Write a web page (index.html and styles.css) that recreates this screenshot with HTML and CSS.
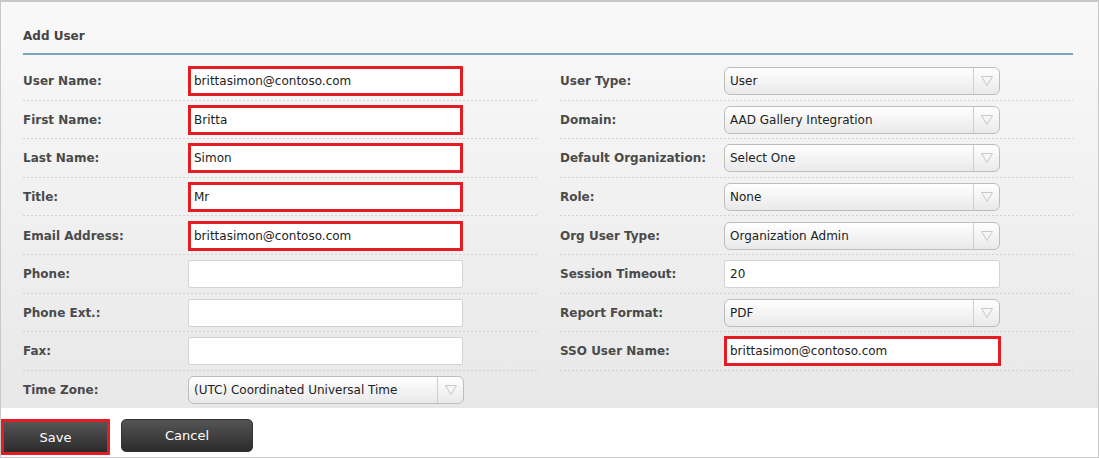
FILE: index.html
```html
<!DOCTYPE html>
<html>
<head>
<meta charset="utf-8">
<title>Add User</title>
<link rel="stylesheet" href="styles.css">
</head>
<body>
<div class="frame">
  <div class="panel">
    <h2 class="title">Add User</h2>
    <div class="rule"></div>
    <div class="grid">
      <div class="col">
        <div class="row"><span class="label">User Name:</span><div class="field hl">brittasimon@contoso.com</div></div>
        <div class="row"><span class="label">First Name:</span><div class="field hl">Britta</div></div>
        <div class="row"><span class="label">Last Name:</span><div class="field hl">Simon</div></div>
        <div class="row"><span class="label">Title:</span><div class="field hl">Mr</div></div>
        <div class="row"><span class="label">Email Address:</span><div class="field hl">brittasimon@contoso.com</div></div>
        <div class="row"><span class="label">Phone:</span><div class="field"></div></div>
        <div class="row"><span class="label">Phone Ext.:</span><div class="field"></div></div>
        <div class="row"><span class="label">Fax:</span><div class="field"></div></div>
        <div class="row last"><span class="label">Time Zone:</span><div class="select"><span class="sv">(UTC) Coordinated Universal Time</span><span class="arrow"><svg width="14" height="12" viewBox="0 0 14 12"><path d="M1.5 1.5 L12.5 1.5 L7 10.5 Z" fill="none" stroke="#c8c8c8" stroke-width="1"/></svg></span></div></div>
      </div>
      <div class="col">
        <div class="row"><span class="label">User Type:</span><div class="select"><span class="sv">User</span><span class="arrow"><svg width="14" height="12" viewBox="0 0 14 12"><path d="M1.5 1.5 L12.5 1.5 L7 10.5 Z" fill="none" stroke="#c8c8c8" stroke-width="1"/></svg></span></div></div>
        <div class="row"><span class="label">Domain:</span><div class="select"><span class="sv">AAD Gallery Integration</span><span class="arrow"><svg width="14" height="12" viewBox="0 0 14 12"><path d="M1.5 1.5 L12.5 1.5 L7 10.5 Z" fill="none" stroke="#c8c8c8" stroke-width="1"/></svg></span></div></div>
        <div class="row"><span class="label">Default Organization:</span><div class="select"><span class="sv">Select One</span><span class="arrow"><svg width="14" height="12" viewBox="0 0 14 12"><path d="M1.5 1.5 L12.5 1.5 L7 10.5 Z" fill="none" stroke="#c8c8c8" stroke-width="1"/></svg></span></div></div>
        <div class="row"><span class="label">Role:</span><div class="select"><span class="sv">None</span><span class="arrow"><svg width="14" height="12" viewBox="0 0 14 12"><path d="M1.5 1.5 L12.5 1.5 L7 10.5 Z" fill="none" stroke="#c8c8c8" stroke-width="1"/></svg></span></div></div>
        <div class="row"><span class="label">Org User Type:</span><div class="select"><span class="sv">Organization Admin</span><span class="arrow"><svg width="14" height="12" viewBox="0 0 14 12"><path d="M1.5 1.5 L12.5 1.5 L7 10.5 Z" fill="none" stroke="#c8c8c8" stroke-width="1"/></svg></span></div></div>
        <div class="row"><span class="label">Session Timeout:</span><div class="field">20</div></div>
        <div class="row"><span class="label">Report Format:</span><div class="select"><span class="sv">PDF</span><span class="arrow"><svg width="14" height="12" viewBox="0 0 14 12"><path d="M1.5 1.5 L12.5 1.5 L7 10.5 Z" fill="none" stroke="#c8c8c8" stroke-width="1"/></svg></span></div></div>
        <div class="row"><span class="label">SSO User Name:</span><div class="field hl">brittasimon@contoso.com</div></div>
      </div>
    </div>
  </div>
  <div class="footer">
    <button class="btn save">Save</button>
    <button class="btn cancel">Cancel</button>
  </div>
</div>
</body>
</html>
```
FILE: styles.css
```css
* { box-sizing: border-box; }
html, body { margin: 0; padding: 0; background: #fff; }
body {
  font-family: "DejaVu Sans", sans-serif;
  font-size: 12px;
  color: #222;
}
.frame {
  width: 1099px;
  height: 458px;
  border: 1px solid #c8c8c8;
  border-top-width: 2px;
  display: flex;
  flex-direction: column;
  background: #fff;
}
.panel {
  height: 406px;
  background: linear-gradient(#f9f9f9, #e8e8e8);
  padding: 0 25px 0 22px;
}
.title {
  margin: 0;
  padding-top: 27px;
  height: 51px;
  font-size: 12px;
  font-weight: bold;
  color: #444;
  line-height: 14px;
}
.rule {
  height: 2px;
  background: #7ca6bf;
  margin-bottom: 7px;
}
.grid {
  display: grid;
  grid-template-columns: 514px 513px;
  column-gap: 23px;
}
.row {
  height: 38.6px;
  display: flex;
  align-items: center;
  background: repeating-linear-gradient(90deg, #d2d2d2 0 2px, transparent 2px 4px) left bottom / 100% 1px no-repeat;
}
.row.last { background: none; }
.label {
  width: 165px;
  flex: none;
  font-weight: bold;
  color: #4a4a4a;
}
.col:last-child .label { width: 164px; }
.field {
  width: 275px;
  height: 28px;
  background: #fff;
  border: 1px solid #d3d3d3;
  border-radius: 2px;
  padding: 0 5px;
  line-height: 26px;
  color: #222;
}
.field.hl {
  border: 3px solid #e41c24;
  border-radius: 0;
  width: 275px;
  height: 30px;
  padding: 0 3px;
  line-height: 24px;
}
.col:last-child .field { width: 276px; }
.col:last-child .field.hl { width: 277px; }
.select {
  width: 276px;
  height: 28px;
  border: 1px solid #bdbdbd;
  border-radius: 6px;
  background: linear-gradient(#ffffff, #e9e9e9);
  display: flex;
  align-items: center;
}
.sv {
  flex: 1;
  padding-left: 5px;
  color: #222;
}
.arrow {
  width: 26px;
  height: 26px;
  border-left: 1px solid #cfcfcf;
  display: flex;
  align-items: center;
  justify-content: center;
}
.footer {
  flex: 1;
  background: #fff;
  display: flex;
  align-items: flex-start;
  gap: 11px;
  padding-top: 11px;
}
.btn {
  font-family: "DejaVu Sans", sans-serif;
  font-size: 13px;
  color: #fff;
  background: linear-gradient(#555, #2b2b2b);
  cursor: pointer;
}
.save {
  width: 109px;
  height: 36px;
  border: 3px solid #e41c24;
  border-radius: 0;
}
.cancel {
  width: 132px;
  height: 33px;
  border: 1px solid #333;
  border-radius: 5px;
}
```
